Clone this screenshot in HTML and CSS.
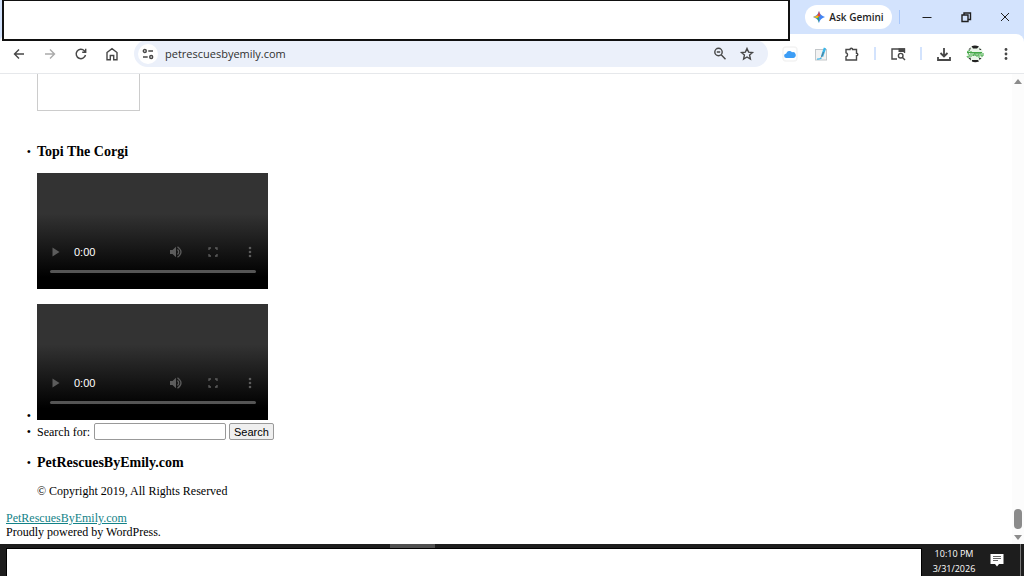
FILE: index.html
```html
<!DOCTYPE html>
<html lang="en">
<head>
<meta charset="utf-8">
<title>PetRescuesByEmily.com</title>
<link rel="stylesheet" href="styles.css">
</head>
<body>
<header class="browser">
  <div class="titlebar">
    <button class="gemini" type="button">
      <svg width="12" height="12" viewBox="0 0 12 12" aria-hidden="true">
        <path fill="#4285f4" d="M6 0Q7 4.500 12 6Q7 7.500 6 12Q5 7.500 0 6Q5 4.500 6 0"/>
        <path fill="#ea4335" d="M6 0Q6.500 3 7.500 4L6 6L4 4.500Q5.500 3 6 0"/>
        <path fill="#fbbc04" d="M0 6Q3 5.500 4.300 4.300L6 6L4 7.200Q2 6.500 0 6"/>
        <path fill="#34a853" d="M4 7.200L6 6V12Q5.500 8.500 4 7.200"/>
      </svg>
      Ask Gemini
    </button>
    <span class="title-divider"></span>
    <button class="window-button" type="button" aria-label="Minimize"><svg width="12" height="12" viewBox="0 0 12 12"><path d="M1.500 6.500h9"/></svg></button>
    <button class="window-button" type="button" aria-label="Restore"><svg width="12" height="12" viewBox="0 0 12 12"><path stroke-width="1.400" d="M2 4h6v6.500H2zM4 4V2h6.500v6.500H8"/></svg></button>
    <button class="window-button" type="button" aria-label="Close"><svg width="12" height="12" viewBox="0 0 12 12"><path d="M2 2l8 8M10 2l-8 8"/></svg></button>
  </div>
  <nav class="toolbar" aria-label="Browser toolbar">
    <button class="tool" type="button" aria-label="Back"><svg width="16" height="16" viewBox="0 0 16 16"><path d="M13 8H3.500M8 3.500L3.500 8L8 12.500"/></svg></button>
    <button class="tool dim" type="button" aria-label="Forward"><svg width="16" height="16" viewBox="0 0 16 16"><path d="M3 8h9.500M8 3.500L12.500 8L8 12.500"/></svg></button>
    <button class="tool" type="button" aria-label="Reload"><svg width="16" height="16" viewBox="0 0 16 16"><path d="M12.500 9a4.700 4.700 0 1 1-1.200-4.300L12.500 6M12.700 2.800V6.300H9.200"/></svg></button>
    <button class="tool" type="button" aria-label="Home"><svg width="16" height="16" viewBox="0 0 16 16"><path d="M3 6.500L8 2.700l5 3.800v7.300H9.700V9.500H6.300v4.300H3z"/></svg></button>
    <div class="omnibox">
      <button class="site-info" type="button" aria-label="Site information"><svg width="12" height="12" viewBox="0 0 12 12"><circle cx="2.800" cy="3" r="1.500"/><path d="M6.300 3h4.700M1 9h4.700"/><circle cx="9.200" cy="9" r="1.500"/></svg></button>
      <input class="address" type="text" aria-label="Address" value="petrescuesbyemily.com">
      <button class="omni-action" type="button" aria-label="Zoom"><svg width="16" height="16" viewBox="0 0 16 16"><circle cx="6.500" cy="6" r="3.700"/><path d="M9.200 8.800l4.300 4.500M4.800 6h3.400"/></svg></button>
      <button class="omni-action" type="button" aria-label="Bookmark"><svg width="16" height="16" viewBox="0 0 16 16"><path d="M8 2.500l1.600 3.600 3.900.4-2.900 2.600.8 3.900L8 11l-3.400 2 .8-3.900-2.900-2.600 3.900-.4z"/></svg></button>
    </div>
    <button class="tool" type="button" aria-label="iCloud"><svg width="16" height="16" viewBox="0 0 16 16"><rect class="tile" x="1" y="1" width="14" height="14" rx="3"/><path class="cloud" d="M4.500 12a2.300 2.300 0 0 1-.2-4.600A3.200 3.200 0 0 1 10 6.200a2.900 2.900 0 0 1 1.500 5.800z"/></svg></button>
    <button class="tool" type="button" aria-label="Notes extension"><svg width="16" height="16" viewBox="0 0 16 16"><rect x="2.500" y="3.500" width="11" height="10.500" fill="#f2f2f2" stroke="#c3c7ca" stroke-width="1"/><path stroke="#39b5e8" stroke-width="2.400" d="M9 10.500L12 2"/><path stroke="#58788e" stroke-width="1" d="M8 11.500l1-1.500 1.500-4"/><path stroke="#39b5e8" stroke-width="1.200" d="M4 13q3 .2 4.500-1"/></svg></button>
    <button class="tool" type="button" aria-label="Extensions"><svg width="16" height="16" viewBox="0 0 16 16"><path d="M2 3.500h4a1.200 1.200 0 0 1 2.600 0H12.500v3.700a1.300 1.300 0 0 1 0 2.600V14H2v-3.300a2 2 0 0 0 0-3.900z"/></svg></button>
    <span class="tool-divider"></span>
    <button class="tool" type="button" aria-label="Search tabs"><svg width="16" height="16" viewBox="0 0 16 16"><path d="M7 13H2V3h12.500v4"/><path fill="#474747" stroke="none" d="M8.500 2.300H15V6H8.500z"/><circle cx="10.700" cy="9.700" r="2.300"/><path d="M12.500 11.500l2.500 2.500"/></svg></button>
    <span class="tool-divider"></span>
    <button class="tool" type="button" aria-label="Downloads"><svg width="16" height="16" viewBox="0 0 16 16"><path stroke-width="1.800" d="M8 2v8M4.500 7L8 10.500L11.500 7M2 11v3h12v-3"/></svg></button>
    <button class="tool" type="button" aria-label="Profile"><svg width="18" height="18" viewBox="0 0 18 18"><circle cx="9" cy="9" r="8.300" fill="#e9f5e8" stroke="none"/><path fill="#222" stroke="none" d="M5.500 1.300Q9-.5 13 1.500L11 3.500H7zM2.500 4.500l2-2v2zM13.500 3l2 2h-2zM2.500 13l2-.5.5 3zM6 15h6l1 1.500q-4 1.500-7 0zM13 13h2.500l-2 2z"/><path stroke="#42a846" stroke-width="1" d="M4 5.500Q0 6 2 8t1 4Q1 13 1 11M5 6v6M7 8v3l2-3v3M10 8v3h2V8h-2M13 8v5M13 8h2v3h2V8M1 7.500h15"/></svg></button>
    <button class="tool" type="button" aria-label="Menu"><svg width="16" height="16" viewBox="0 0 16 16"><g fill="#474747" stroke="none"><circle cx="8" cy="3.500" r="1.400"/><circle cx="8" cy="8" r="1.400"/><circle cx="8" cy="12.500" r="1.400"/></g></svg></button>
  </nav>
  <div class="tab-cover"></div>
</header>

<div class="viewport">
  <main class="page">
    <ul class="widgets">
      <li class="plain"><div class="frame"></div></li>
      <li>
        <h3>Topi The Corgi</h3>
        <div class="player">
          <div class="controls">
            <button type="button" aria-label="Play"><svg width="14" height="14" viewBox="0 0 14 14"><path d="M3.500 2.500v9L10.500 7z"/></svg></button>
            <span class="time">0:00</span>
            <button type="button" aria-label="Mute"><svg width="14" height="14" viewBox="0 0 14 14"><path d="M1 5h2.500L7 1.700v10.600L3.500 9H1z"/><path class="line" d="M8.500 4.500q2.300 2.500 0 5M8.500 1.700q7 5.300 0 10.600"/></svg></button>
            <button type="button" aria-label="Full screen"><svg width="14" height="14" viewBox="0 0 14 14"><path class="line" d="M5 3H3v2M9 3h2v2M5 11H3V9M9 11h2V9"/></svg></button>
            <button type="button" aria-label="More options"><svg width="14" height="14" viewBox="0 0 14 14"><circle cx="7" cy="3" r="1.300"/><circle cx="7" cy="7" r="1.300"/><circle cx="7" cy="11" r="1.300"/></svg></button>
          </div>
          <input class="seek" type="range" min="0" max="100" value="0" aria-label="Seek" disabled>
        </div>
      </li>
      <li class="video-item">
        <div class="player inline">
          <div class="controls">
            <button type="button" aria-label="Play"><svg width="14" height="14" viewBox="0 0 14 14"><path d="M3.500 2.500v9L10.500 7z"/></svg></button>
            <span class="time">0:00</span>
            <button type="button" aria-label="Mute"><svg width="14" height="14" viewBox="0 0 14 14"><path d="M1 5h2.500L7 1.700v10.600L3.500 9H1z"/><path class="line" d="M8.500 4.500q2.300 2.500 0 5M8.500 1.700q7 5.300 0 10.600"/></svg></button>
            <button type="button" aria-label="Full screen"><svg width="14" height="14" viewBox="0 0 14 14"><path class="line" d="M5 3H3v2M9 3h2v2M5 11H3V9M9 11h2V9"/></svg></button>
            <button type="button" aria-label="More options"><svg width="14" height="14" viewBox="0 0 14 14"><circle cx="7" cy="3" r="1.300"/><circle cx="7" cy="7" r="1.300"/><circle cx="7" cy="11" r="1.300"/></svg></button>
          </div>
          <input class="seek" type="range" min="0" max="100" value="0" aria-label="Seek" disabled>
        </div>
      </li>
      <li>
        <form class="search">
          <label for="s">Search for:</label>
          <input class="search-field" id="s" type="text">
          <button class="search-button" type="button">Search</button>
        </form>
      </li>
      <li class="about">
        <h3>PetRescuesByEmily.com</h3>
        <p>© Copyright 2019, All Rights Reserved</p>
      </li>
    </ul>
    <footer class="credits">
      <a href="#">PetRescuesByEmily.com</a><br>
      Proudly powered by WordPress.
    </footer>
  </main>
  <div class="scrollbar" aria-hidden="true">
    <svg width="8" height="5" viewBox="0 0 8 5"><path d="M0 5L4 0l4 5z"/></svg>
    <span class="thumb"></span>
    <svg width="8" height="5" viewBox="0 0 8 5"><path d="M0 0L4 5l4-5z"/></svg>
  </div>
</div>

<div class="taskbar">
  <span class="active-task"></span>
  <div class="task-cover"></div>
  <div class="clock"><time>10:10 PM</time><time>3/31/2026</time></div>
  <button class="notifications" type="button" aria-label="Notifications"><svg width="14" height="14" viewBox="0 0 14 14"><path fill="#fff" d="M.5 1h13v10H9l-2 2.500L5 11H.5z"/><path stroke="#666" d="M3 3.500h8M3 5.500h8M3 7.500h5"/></svg></button>
  <span class="show-desktop"></span>
</div>
</body>
</html>
```
FILE: styles.css
```css
* {
  box-sizing: border-box;
}

body {
  display: flex;
  flex-direction: column;
  min-height: 100vh;
  margin: 0;
  background: #fff;
  color: #000;
  font-family: "Liberation Serif", serif;
  font-size: 12px;
  line-height: 14px;
}

button {
  display: flex;
  align-items: center;
  justify-content: center;
  margin: 0;
  padding: 0;
  border: 0;
  background: none;
}

svg {
  display: block;
  flex: none;
}

/* Browser window */
.browser {
  position: relative;
  background: #d3e3fd;
  font-family: "Open Sans", sans-serif;
}

.titlebar {
  display: flex;
  align-items: center;
  justify-content: flex-end;
  height: 34px;
}

.gemini {
  gap: 4px;
  width: 87px;
  height: 24px;
  border-radius: 12px;
  background: #fff;
  color: #1f1f1f;
  font: 600 10px "Open Sans", sans-serif;
  white-space: nowrap;
}

.title-divider {
  width: 1px;
  height: 14px;
  margin: 0 7px;
  background: #a8c7fa;
}

.window-button {
  width: 39px;
  height: 34px;
}

.window-button path {
  fill: none;
  stroke: #1f1f1f;
}

.toolbar {
  display: flex;
  align-items: center;
  gap: 1px;
  height: 40px;
  padding: 0 3px 0 4px;
  border-bottom: 1px solid #e6e8eb;
  border-radius: 8px 8px 0 0;
  background: #fff;
}

.tool,
.omni-action {
  width: 30px;
  height: 28px;
}

.omni-action {
  width: 27px;
}

.tool svg,
.omnibox svg {
  fill: none;
  stroke: #474747;
  stroke-width: 1.400;
}

.tool.dim svg {
  stroke: #aaa;
}

.tool .tile {
  fill: #fff;
  stroke: #f3f3f3;
}

.tool .cloud {
  fill: #3c9df5;
  stroke: none;
}

.tool-divider {
  width: 2px;
  height: 13px;
  margin: 0 6px;
  background: #d3e3fd;
}

.omnibox {
  display: flex;
  flex: 1;
  align-items: center;
  min-width: 0;
  height: 27px;
  margin: 0 6px;
  padding: 0 8px 0 4px;
  border-radius: 14px;
  background: #ebf0fa;
}

.site-info {
  width: 20px;
  height: 20px;
  border-radius: 50%;
  background: #fff;
}

.address {
  flex: 1;
  min-width: 0;
  padding: 0 0 0 7px;
  border: 0;
  background: none;
  color: #303030;
  font: 11px "Open Sans", sans-serif;
}

.tab-cover {
  position: absolute;
  top: 0;
  right: 234px;
  left: 2px;
  height: 41px;
  border: 2px solid #111;
  border-top-width: 1px;
  background: #fff;
}

/* Web page */
.viewport {
  display: flex;
  flex: 1;
}

.page {
  flex: 1;
  padding: 0 6px 5px;
}

.widgets {
  margin: 0;
  padding: 0 0 0 31px;
  list-style-type: "\2022\a0\a0";
}

.plain {
  list-style: none;
}

.frame {
  width: 103px;
  height: 37px;
  margin-bottom: 32px;
  border: 1px solid #ccc;
  border-top: 0;
}

h3 {
  margin: 0 0 13px;
  font-size: 14px;
  line-height: 17px;
}

.player {
  width: 231px;
  height: 116px;
  padding: 69px 8px 0 12px;
  overflow: hidden;
  background: linear-gradient(#333 0%, #333 35%, #000 90%);
}

.player.inline {
  display: inline-block;
}

.video-item {
  margin-top: 15px;
}

.controls {
  display: flex;
  align-items: center;
  gap: 17px;
  color: #fff;
}

.controls button {
  width: 20px;
  height: 20px;
}

.controls button:first-child {
  width: 14px;
}

.controls svg {
  fill: #5c5c5c;
}

.controls .line {
  fill: none;
  stroke: #5c5c5c;
  stroke-width: 1.300;
}

.time {
  flex: 1;
  margin-left: -6px;
  font: 11px "Liberation Sans", sans-serif;
}

.seek {
  display: block;
  appearance: none;
  width: 206px;
  height: 3px;
  margin: 8px 0 0 1px;
  border-radius: 2px;
  background: #555;
}

.seek::-webkit-slider-thumb {
  appearance: none;
  width: 0;
  height: 0;
}

.search {
  display: flex;
  align-items: center;
  gap: 3px;
}

.search-field {
  width: 132px;
  height: 17px;
  margin-left: 1px;
  padding: 0 2px;
  border: 1px solid #999;
  border-radius: 2px;
}

.search-button {
  height: 17px;
  padding: 0 4px;
  border: 1px solid #999;
  border-radius: 2px;
  background: #efefef;
  color: #000;
  font: 11px "Liberation Sans", sans-serif;
}

.about {
  margin-top: 14px;
}

.about p {
  margin: 0;
}

.credits {
  margin-top: 13px;
}

.credits a {
  color: #128287;
}

.scrollbar {
  display: flex;
  flex-direction: column;
  align-items: center;
  width: 12px;
  padding: 5px 0 4px;
  background: #fcfcfc;
}

.scrollbar svg {
  fill: #8b8b8b;
}

.thumb {
  width: 8px;
  height: 20px;
  margin: auto 0 6px;
  border-radius: 4px;
  background: #8b8b8b;
}

/* Taskbar */
.taskbar {
  position: relative;
  display: flex;
  height: 32px;
  padding-left: 6px;
  background: #1d1d1d;
  color: #fff;
  font: 9px/15px "Open Sans", sans-serif;
}

.active-task {
  position: absolute;
  top: 0;
  left: 390px;
  width: 45px;
  height: 4px;
  background: #505050;
}

.task-cover {
  flex: 1;
  margin-top: 4px;
  border: solid #000;
  border-width: 1px 1px 0;
  background: #fff;
}

.clock {
  display: flex;
  flex-direction: column;
  align-items: center;
  width: 64px;
  padding-top: 2px;
}

.notifications {
  width: 22px;
}

.show-desktop {
  width: 4px;
  margin-left: 12px;
  border-left: 1px solid #777;
}
```
